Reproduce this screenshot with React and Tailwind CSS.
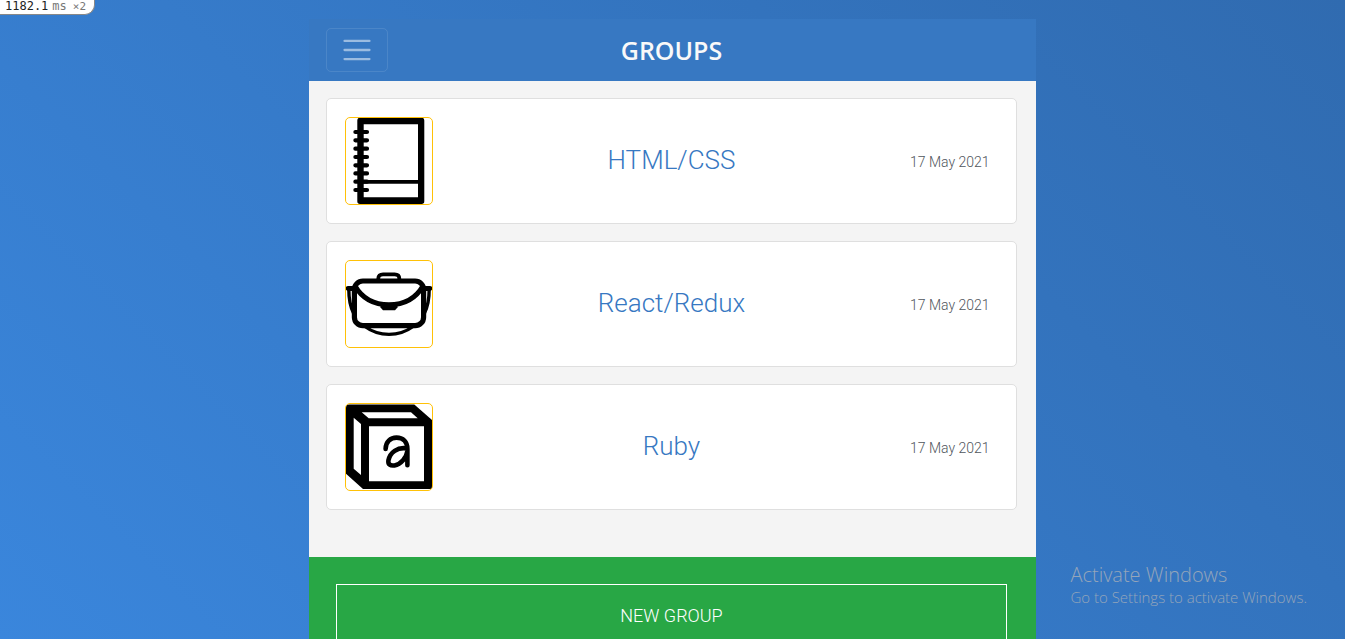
import React from "react";

function NotebookIcon() {
  return (
    <svg viewBox="1 1 86 86" className="size-full" aria-hidden="true" fill="none" stroke="#000">
      <path
        d="M15 .7H76.6a2.7 2.7 0 0 1 2.7 2.7V84.3a2.7 2.7 0 0 1-2.7 2.7H15a2.7 2.7 0 0 1-2.7-2.7V3.4A2.7 2.7 0 0 1 15 .7ZM18.7 7.3V80.3H73V7.3Z"
        fill="#000"
        fillRule="evenodd"
        stroke="none"
      />
      <path d="M18 64.8H74" strokeWidth="3.8" />
      <path
        d="M10.4 15H22M10.4 23.3H22M10.4 31.7H22M10.4 40H22M10.4 48.3H22M10.4 56.4H22M10.4 64.7H22M10.4 73H22"
        strokeWidth="4.2"
        strokeLinecap="round"
      />
    </svg>
  );
}

function BagIcon() {
  return (
    <svg viewBox="1 1 86 86" className="size-full" aria-hidden="true" fill="none" stroke="#000">
      <rect x="9.4" y="21" width="69.2" height="44.7" rx="8.5" strokeWidth="5.2" />
      <path d="M33.3 20V18.5Q33.3 14.3 38 14.3H49.6Q54.3 14.3 54.3 18.5V20" strokeWidth="3.8" />
      <path d="M10 26C17 38 29 44.8 44 44.8S71 38 78 26" strokeWidth="5" />
      <path d="M35.5 44H52.5V47.5L50 50.3H38L35.5 47.5Z" fill="#000" stroke="none" />
      <path d="M3.2 28.4H11M77 28.4H84.8" strokeWidth="5" strokeLinecap="round" />
      <path d="M3.8 29C3.8 38 5 46 8.5 53M84.2 29C84.2 38 83 46 79.5 53" strokeWidth="3.4" />
      <path d="M20 66.5C34 77 54 77 68 66.5" strokeWidth="3.4" />
    </svg>
  );
}

function CubeIcon() {
  return (
    <svg viewBox="1 1 86 86" className="size-full" aria-hidden="true">
      <path
        fillRule="evenodd"
        d="M3.6 1.4H69.3L87.2 17.3V83.5Q87.2 86 84.7 86H18L1 70.7V4Q1 1.4 3.6 1.4ZM24 23.3V78.3H79V23.3ZM16.7 9.3L23.7 15.3H72.7L66 9.3ZM8.7 14.7V65.7L16 72V21Z"
      />
      <path
        d="M40.6 46C40.6 39 45.5 34.6 51.5 34.6C58 34.6 62.4 39 62.4 46V62.3M62.4 45.5C52.5 43.6 44.8 49.5 43.4 57.5C42.8 61.5 45.5 63 49.5 62.4C56 61.4 61.5 54.5 62.4 48"
        fill="none"
        stroke="#000"
        strokeWidth="4.6"
        strokeLinecap="round"
        strokeLinejoin="round"
      />
    </svg>
  );
}

const groups = [
  { name: "HTML/CSS", date: "17 May 2021", Icon: NotebookIcon },
  { name: "React/Redux", date: "17 May 2021", Icon: BagIcon },
  { name: "Ruby", date: "17 May 2021", Icon: CubeIcon },
];

function Header() {
  return (
    <header className="grid grid-cols-[1fr_auto_1fr] items-center bg-[#3778c2] py-[9px] pr-[19px] pl-[17px]">
      <button
        type="button"
        aria-label="Toggle navigation"
        className="flex items-center justify-self-start rounded-[5px] border border-white/10 px-[13px] py-1"
      >
        <svg viewBox="0 0 30 30" className="size-[34px]" aria-hidden="true">
          <path
            d="M4 7h22M4 15h22M4 23h22"
            stroke="rgba(255,255,255,0.5)"
            strokeWidth="2"
            strokeLinecap="round"
          />
        </svg>
      </button>
      <h1 className="font-['Open_Sans','Noto_Sans',sans-serif] text-[25px] leading-8 font-semibold text-[#f9f9f9]">
        GROUPS
      </h1>
    </header>
  );
}

function GroupCard({ name, date, Icon }) {
  return (
    <li className="grid grid-cols-[1fr_auto_1fr] items-center rounded-[5px] border border-[#dfdfdf] bg-white p-[18px]">
      <div className="size-[88px] overflow-hidden rounded-[5px] border border-[#ffc107]">
        <Icon />
      </div>
      <h2 className="pb-[2px] text-[26px] leading-8 font-light">
        <a href="#group" className="text-[#3778c2]">
          {name}
        </a>
      </h2>
      <time
        dateTime="2021-05-17"
        className="justify-self-end pt-[2px] pr-[8px] text-[14px] leading-5 font-light text-[#50565c]"
      >
        {date}
      </time>
    </li>
  );
}

export default function App() {
  return (
    <div className="h-screen overflow-hidden bg-linear-45 from-[#3a86dc] to-[#306bb0] pt-[19px] font-[Roboto,sans-serif]">
      <div className="mx-auto w-[54%]">
        <Header />
        <main className="bg-[#f4f4f4] pt-[17px] pr-[19px] pb-[47px] pl-[17px]">
          <ul className="flex flex-col gap-[17px]">
            {groups.map((group) => (
              <GroupCard key={group.name} {...group} />
            ))}
          </ul>
        </main>
        <footer className="bg-[#28a745] py-[27px] pr-[29px] pl-[27px]">
          <button
            type="button"
            className="w-full border border-white py-[17px] text-[18px] leading-[27px] font-light text-white"
          >
            NEW GROUP
          </button>
        </footer>
      </div>

      <div className="absolute top-0 left-0 flex items-baseline rounded-br-[10px] border-r border-b border-[#888] bg-white pr-[8px] pb-px pl-[5px] font-['DejaVu_Sans_Mono',monospace] text-[12px] leading-[13px] text-[#222]">
        <span>1182.1</span>
        <span className="ml-[4px] text-[#777]">ms</span>
        <span className="ml-[6px] text-[11px] text-[#777]">×2</span>
      </div>

      <div className="absolute right-[38px] bottom-[32px] font-['Open_Sans','Noto_Sans',sans-serif] font-light text-[#94a5ba]">
        <p className="text-[20px] leading-[25px]">Activate Windows</p>
        <p className="text-[15px] leading-[20px]">Go to Settings to activate Windows.</p>
      </div>
    </div>
  );
}
